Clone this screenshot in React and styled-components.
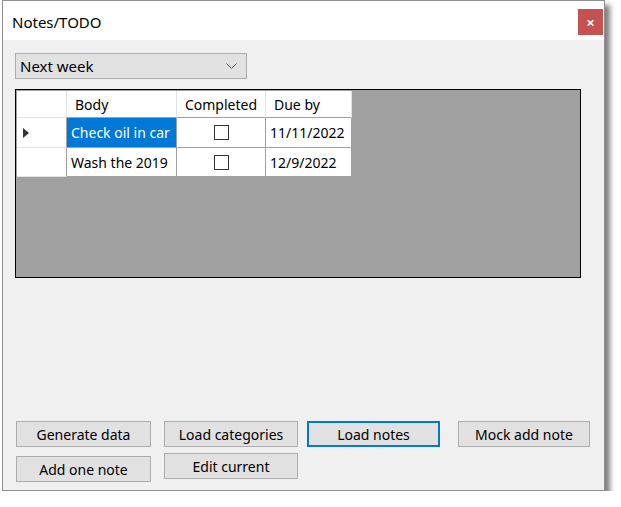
import React from 'react';
import styled, { createGlobalStyle } from 'styled-components';

const Global = createGlobalStyle`
  html, body {
    margin: 0;
    padding: 0;
    background: #ffffff;
  }
  body {
    font-family: 'Noto Sans', 'Open Sans', sans-serif;
    color: #000;
  }
`;

// window frame with its drop shadow
const Window = styled.div`
  margin-left: 2px;
  width: 601px;
  height: 489px;
  border: 1px solid #8f8f8f;
  background: #f0f0f0;
  box-shadow: 5px 5px 5px rgba(0, 0, 0, 0.5);
  display: flex;
  flex-direction: column;
`;

const TitleBar = styled.div`
  height: 39px;
  background: #ffffff;
  display: flex;
  align-items: center;
  justify-content: space-between;
  padding-left: 9px;
  padding-right: 1px;
`;

const Title = styled.span`
  font-size: 15px;
  margin-top: 2px;
`;

const CloseButton = styled.div`
  width: 25px;
  height: 26px;
  margin-top: 2px;
  background: #c75050;
  color: #fff;
  font-size: 15px;
  font-weight: bold;
  display: flex;
  align-items: center;
  justify-content: center;
`;

const Body = styled.div`
  flex: 1;
  display: flex;
  flex-direction: column;
  padding: 13px 0 0 12px;
`;

const Select = styled.div`
  width: 232px;
  height: 26px;
  box-sizing: border-box;
  border: 1px solid #adadad;
  background: #e1e1e1;
  display: flex;
  align-items: center;
  justify-content: space-between;
  padding: 0 9px 0 4px;
  font-size: 15px;
`;

const Grid = styled.div`
  margin-top: 10px;
  width: 566px;
  height: 189px;
  box-sizing: border-box;
  border: 1px solid #000;
  background: #a0a0a0;
  padding: 1px 0 0 1px;
`;

const Table = styled.div`
  display: grid;
  grid-template-columns: 50px 110px 89px 86px;
  grid-template-rows: 27px 30px 29px;
  width: max-content;
  background: #fff;
`;

const HeadCell = styled.div`
  display: flex;
  align-items: center;
  padding-left: ${p => (p.$center ? 0 : '8px')};
  justify-content: ${p => (p.$center ? 'center' : 'flex-start')};
  font-size: 14px;
  border-right: 1px solid #e3e3e3;
  border-bottom: 1px solid ${p => (p.$corner ? '#e3e3e3' : '#a0a0a0')};
  box-sizing: border-box;
`;

const RowHead = styled.div`
  display: flex;
  align-items: center;
  padding-left: 6px;
  border-right: 1px solid #a0a0a0;
  border-bottom: 1px solid #e3e3e3;
  box-sizing: border-box;
`;

const Cell = styled.div`
  display: flex;
  align-items: center;
  justify-content: ${p => (p.$center ? 'center' : 'flex-start')};
  padding-left: ${p => (p.$center ? 0 : '4px')};
  font-size: 14px;
  border-right: 1px solid #a0a0a0;
  border-bottom: 1px solid #a0a0a0;
  box-sizing: border-box;
  background: ${p => (p.$selected ? '#0078d7' : '#fff')};
  color: ${p => (p.$selected ? '#fff' : '#000')};
`;

const Check = styled.span`
  width: 13px;
  height: 13px;
  border: 1px solid #333;
  background: #fff;
`;

const Arrow = styled.span`
  width: 0;
  height: 0;
  border-top: 5px solid transparent;
  border-bottom: 5px solid transparent;
  border-left: 6px solid #333;
`;

const Buttons = styled.div`
  margin-top: auto;
  margin-bottom: 8px;
  display: grid;
  grid-template-columns: 148px 143px 151px auto;
  row-gap: 8px;
  padding-left: 1px;
  align-items: start;
`;

const Button = styled.div`
  width: ${p => p.$w}px;
  height: 26px;
  box-sizing: border-box;
  border: ${p => (p.$focus ? '2px solid #0078d7' : '1px solid #adadad')};
  background: #e1e1e1;
  display: flex;
  align-items: center;
  justify-content: center;
  font-size: 14px;
  margin-top: ${p => p.$dy || 0}px;
`;

const rows = [
  { body: 'Check oil in car', due: '11/11/2022', current: true },
  { body: 'Wash the 2019', due: '12/9/2022' },
];

export default function App() {
  return (
    <>
      <Global />
      <Window>
        <TitleBar>
          <Title>Notes/TODO</Title>
          <CloseButton>×</CloseButton>
        </TitleBar>
        <Body>
          <Select>
            <span>Next week</span>
            <svg width="11" height="7" viewBox="0 0 11 7">
              <path d="M0.5 0.5 L5.5 5.5 L10.5 0.5" fill="none" stroke="#555" strokeWidth="1" />
            </svg>
          </Select>
          <Grid>
            <Table>
              <HeadCell $corner />
              <HeadCell>Body</HeadCell>
              <HeadCell $center>Completed</HeadCell>
              <HeadCell>Due by</HeadCell>
              {rows.map((r, i) => (
                <React.Fragment key={i}>
                  <RowHead>{r.current && <Arrow />}</RowHead>
                  <Cell $selected={r.current}>{r.body}</Cell>
                  <Cell $center>
                    <Check />
                  </Cell>
                  <Cell>{r.due}</Cell>
                </React.Fragment>
              ))}
            </Table>
          </Grid>
          <Buttons>
            <Button $w={135}>Generate data</Button>
            <Button $w={134}>Load categories</Button>
            <Button $w={133} $focus>Load notes</Button>
            <Button $w={132}>Mock add note</Button>
            <Button $w={135} $dy={1}>Add one note</Button>
            <Button $w={134} $dy={-2}>Edit current</Button>
          </Buttons>
        </Body>
      </Window>
    </>
  );
}
